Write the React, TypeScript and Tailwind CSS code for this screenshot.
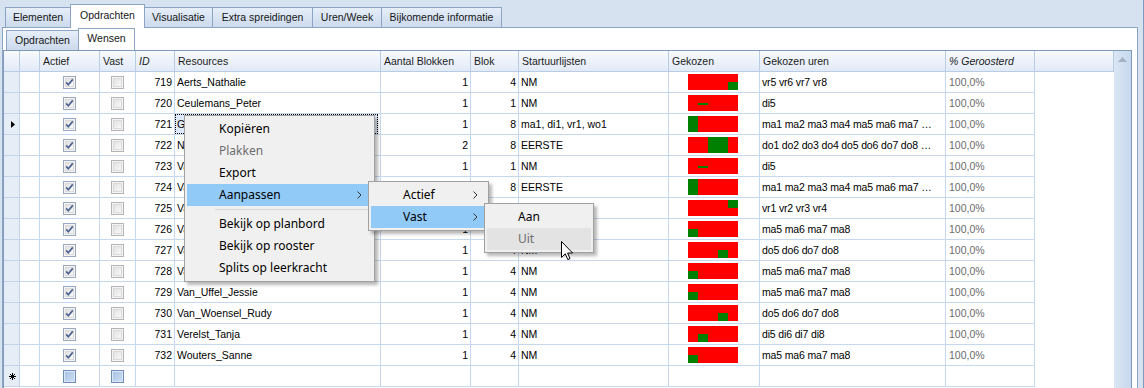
import React from 'react';

type Seg = [number, number, number];

interface Row {
  id: number;
  name: string;
  aantal: number;
  blok: number;
  start: string;
  uren: string;
  segs: Seg[];
}

const rows: Row[] = [
  { id: 719, name: 'Aerts_Nathalie', aantal: 1, blok: 4, start: 'NM', uren: 'vr5 vr6 vr7 vr8', segs: [[4, 5, 8]] },
  { id: 720, name: 'Ceulemans_Peter', aantal: 1, blok: 1, start: 'NM', uren: 'di5', segs: [[1, 5, 5]] },
  { id: 721, name: 'Goossens_Lies', aantal: 1, blok: 8, start: 'ma1, di1, vr1, wo1', uren: 'ma1 ma2 ma3 ma4 ma5 ma6 ma7 …', segs: [[0, 1, 8]] },
  { id: 722, name: 'Nijs_Karen', aantal: 2, blok: 8, start: 'EERSTE', uren: 'do1 do2 do3 do4 do5 do6 do7 do8 …', segs: [[2, 1, 8], [3, 1, 8]] },
  { id: 723, name: 'Van_Aelst_Jan', aantal: 1, blok: 1, start: 'NM', uren: 'di5', segs: [[1, 5, 5]] },
  { id: 724, name: 'Van_Dam_Els', aantal: 1, blok: 8, start: 'EERSTE', uren: 'ma1 ma2 ma3 ma4 ma5 ma6 ma7 …', segs: [[0, 1, 8]] },
  { id: 725, name: 'Van_Dyck_Tom', aantal: 1, blok: 4, start: 'NM', uren: 'vr1 vr2 vr3 vr4', segs: [[4, 1, 4]] },
  { id: 726, name: 'Van_Hove_Ann', aantal: 1, blok: 4, start: 'NM', uren: 'ma5 ma6 ma7 ma8', segs: [[0, 5, 8]] },
  { id: 727, name: 'Van_Looy_Bart', aantal: 1, blok: 4, start: 'NM', uren: 'do5 do6 do7 do8', segs: [[3, 5, 8]] },
  { id: 728, name: 'Van_Roey_Katrien', aantal: 1, blok: 4, start: 'NM', uren: 'ma5 ma6 ma7 ma8', segs: [[0, 5, 8]] },
  { id: 729, name: 'Van_Uffel_Jessie', aantal: 1, blok: 4, start: 'NM', uren: 'ma5 ma6 ma7 ma8', segs: [[0, 5, 8]] },
  { id: 730, name: 'Van_Woensel_Rudy', aantal: 1, blok: 4, start: 'NM', uren: 'do5 do6 do7 do8', segs: [[3, 5, 8]] },
  { id: 731, name: 'Verelst_Tanja', aantal: 1, blok: 4, start: 'NM', uren: 'di5 di6 di7 di8', segs: [[1, 5, 8]] },
  { id: 732, name: 'Wouters_Sanne', aantal: 1, blok: 4, start: 'NM', uren: 'ma5 ma6 ma7 ma8', segs: [[0, 5, 8]] },
];

const outerTabs = [
  { label: 'Elementen', w: 'w-[66px]' },
  { label: 'Opdrachten', w: 'w-[75px]', active: true },
  { label: 'Visualisatie', w: 'w-[69px]' },
  { label: 'Extra spreidingen', w: 'w-[101px]' },
  { label: 'Uren/Week', w: 'w-[70px]' },
  { label: 'Bijkomende informatie', w: 'w-[121px]' },
];

function Bar({ segs }: { segs: Seg[] }) {
  return (
    <svg width="50" height="16" className="block">
      <rect width="50" height="16" fill="#ff0000" />
      {segs.map(([d, a, b], i) => (
        <rect key={i} x={d * 10} y={(a - 1) * 2} width="10" height={(b - a + 1) * 2} fill="#008000" />
      ))}
    </svg>
  );
}

function Check({ checked, fresh }: { checked?: boolean; fresh?: boolean }) {
  if (fresh) {
    return (
      <span className="block w-[13px] h-[13px] border border-[#6f8cb6] p-px bg-[#dbe7f6]">
        <span className="block w-full h-full bg-linear-to-br from-[#a9c4e6] to-[#c9dbf1]" />
      </span>
    );
  }
  return (
    <span className={`relative block w-[13px] h-[13px] border ${checked ? 'border-[#9aa9be]' : 'border-[#b4b4b4]'} bg-[#f4f4f4] p-px`}>
      <span className="block w-full h-full border border-[#dadada] bg-linear-to-br from-[#e2e2e2] to-[#f8f8f8]" />
      {checked && (
        <svg width="13" height="13" viewBox="0 0 13 13" className="absolute -left-px -top-px">
          <path d="M3.2 6.4 L5.3 8.8 L9.8 3.4" fill="none" stroke="#4c6290" strokeWidth="1.7" />
        </svg>
      )}
    </span>
  );
}

function H({ w, italic, children }: { w: string; italic?: boolean; children?: React.ReactNode }) {
  return (
    <div
      className={`${w} shrink-0 h-full border-r border-b border-[#b9cce5] bg-linear-to-b from-[#f7fafe] to-[#e2eaf6] pl-[3px] leading-[20px] whitespace-nowrap overflow-hidden text-[#1b1b1b] ${italic ? 'italic' : ''}`}
    >
      {children}
    </div>
  );
}

function C({ w, cls = '', children }: { w: string; cls?: string; children?: React.ReactNode }) {
  return (
    <div className={`${w} shrink-0 h-full border-r border-b border-[#c6d8f0] leading-[20px] whitespace-nowrap overflow-hidden ${cls}`}>
      {children}
    </div>
  );
}

function Chevron() {
  return (
    <svg width="5" height="8" viewBox="0 0 5 8" className="absolute top-[7px]">
      <path d="M0.5 0.5 L4 4 L0.5 7.5" fill="none" stroke="#333" strokeWidth="1" />
    </svg>
  );
}

function DataRow({ r, focused }: { r: Row; focused?: boolean }) {
  return (
    <div className="flex h-[21px]">
      <div className="w-[16px] shrink-0 h-full border-r border-b border-[#c3d3e9] bg-[#e6edf7] flex items-center justify-center">
        {focused && (
          <svg width="4" height="7" viewBox="0 0 4 7" className="ml-[3px]">
            <path d="M0 0 L4 3.5 L0 7 Z" fill="#000" />
          </svg>
        )}
      </div>
      <C w="w-[20px]" />
      <C w="w-[60px]" cls="flex items-center justify-center">
        <Check checked />
      </C>
      <C w="w-[36px]" cls="flex items-center justify-center">
        <Check />
      </C>
      <C w="w-[39px]" cls="text-right pr-[2px]">{r.id}</C>
      <C w="w-[206px]" cls="pl-[2px] relative">
        {focused && (
          <div className="absolute inset-y-0 left-0 right-[2px] bg-[#dfe9f8] outline-1 outline-dotted outline-black -outline-offset-1" />
        )}
        <span className="relative">{r.name}</span>
      </C>
      <C w="w-[90px]" cls="text-right pr-[2px]">{r.aantal}</C>
      <C w="w-[48px]" cls="text-right pr-[2px]">{r.blok}</C>
      <C w="w-[150px]" cls="pl-[2px]">{r.start}</C>
      <C w="w-[91px]" cls="pl-[19px] pt-[2px]">
        <Bar segs={r.segs} />
      </C>
      <C w="w-[186px]" cls="pl-[2px] tracking-[-0.15px]">{r.uren}</C>
      <C w="w-[89px]" cls="pl-[3px] text-[#6b6b6b]">100,0%</C>
      <div className="flex-1" />
    </div>
  );
}

function NewRow() {
  return (
    <div className="flex h-[21px]">
      <div className="w-[16px] shrink-0 h-full border-r border-b border-[#c3d3e9] bg-[#e6edf7] flex items-center justify-center">
        <svg width="7" height="7" viewBox="0 0 7 7" className="ml-px">
          <path d="M3.5 0 V7 M0 3.5 H7 M1 1 L6 6 M6 1 L1 6" stroke="#000" strokeWidth="1" />
        </svg>
      </div>
      <C w="w-[20px]" />
      <C w="w-[60px]" cls="flex items-center justify-center">
        <Check fresh />
      </C>
      <C w="w-[36px]" cls="flex items-center justify-center">
        <Check fresh />
      </C>
      <C w="w-[39px]" />
      <C w="w-[206px]" />
      <C w="w-[90px]" />
      <C w="w-[48px]" />
      <C w="w-[150px]" />
      <C w="w-[91px]" />
      <C w="w-[186px]" />
      <C w="w-[89px]" />
      <div className="flex-1" />
    </div>
  );
}

function Item({
  label,
  pl,
  disabled,
  active,
  hover,
  arrow,
}: {
  label: string;
  pl: string;
  disabled?: boolean;
  active?: boolean;
  hover?: boolean;
  arrow?: string;
}) {
  const bg = active ? 'bg-[#91c9f7]' : hover ? 'bg-[#e3e3e3]' : '';
  return (
    <div className={`relative h-[22px] leading-[22px] ${pl} ${bg} ${disabled ? 'text-[#6d6d6d]' : 'text-black'}`}>
      {label}
      {arrow && (
        <span className={`absolute top-0 ${arrow}`}>
          <Chevron />
        </span>
      )}
    </div>
  );
}

export default function App() {
  return (
    <div className="relative w-[1144px] h-[388px] overflow-hidden bg-[#d6e2f0] border-r border-[#7f9bbd] flex flex-col font-['Liberation_Sans',Arial,sans-serif] text-[10.5px] text-black">
      {/* outer tabs */}
      <div className="h-[27px] shrink-0 flex items-end pl-[5px]">
        {outerTabs.map((t, i) => (
          <div
            key={t.label}
            className={`${t.w} ${i > 0 ? '-ml-px' : ''} shrink-0 flex items-center justify-center border-l border-t border-r border-[#8da5c5] text-[#161616] ${
              t.active
                ? 'relative z-10 h-[24px] -mb-px bg-white pb-[2px]'
                : 'h-[20px] bg-linear-to-b from-[#e6eef9] to-[#ccdaed]'
            }`}
          >
            {t.label}
          </div>
        ))}
      </div>

      {/* outer tab page */}
      <div className="ml-[2px] w-[1136px] flex-1 min-h-0 flex flex-col bg-white border-l border-t border-r border-[#8da5c5]">
        {/* inner tabs */}
        <div className="h-[22px] shrink-0 flex items-end pl-[3px]">
          <div className="w-[73px] h-[20px] shrink-0 flex items-center justify-center border-l border-t border-r border-[#8da5c5] bg-linear-to-b from-[#e6eef9] to-[#ccdaed] text-[#161616]">
            Opdrachten
          </div>
          <div className="w-[57px] -ml-px h-[22px] shrink-0 flex items-center justify-center border-l border-t border-r border-[#8da5c5] bg-white text-[#161616] pb-[1px]">
            Wensen
          </div>
        </div>

        {/* grid */}
        <div className="w-[1129px] flex-1 min-h-0 flex border-l border-t border-r border-[#7f9aba] bg-white">
          <div className="flex-1 flex flex-col">
            <div className="flex h-[21px] shrink-0">
              <H w="w-[16px]" />
              <H w="w-[20px]" />
              <H w="w-[60px]">Actief</H>
              <H w="w-[36px]">Vast</H>
              <H w="w-[39px]" italic>
                ID
              </H>
              <H w="w-[206px]">Resources</H>
              <H w="w-[90px]">Aantal Blokken</H>
              <H w="w-[48px]">Blok</H>
              <H w="w-[150px]">Startuurlijsten</H>
              <H w="w-[91px]">Gekozen</H>
              <H w="w-[186px]">Gekozen uren</H>
              <H w="w-[89px]" italic>
                % Geroosterd
              </H>
              <H w="flex-1" />
            </div>
            {rows.map((r) => (
              <DataRow key={r.id} r={r} focused={r.id === 721} />
            ))}
            <NewRow />
          </div>
          {/* vertical scrollbar */}
          <div className="w-[17px] shrink-0 bg-linear-to-r from-[#dae6f4] to-[#c7d8ed] flex justify-center">
            <svg width="9" height="5" viewBox="0 0 9 5" className="mt-[6px]">
              <path d="M0 5 L4.5 0 L9 5 Z" fill="#a3b1c3" />
            </svg>
          </div>
        </div>
      </div>

      {/* context menu */}
      <div className="absolute left-[184px] top-[115px] w-[191px] border border-[#a0a0a0] bg-[#f0f0f0] p-[2px] shadow-[3px_3px_3px_rgba(0,0,0,0.28)] font-['Noto_Sans',sans-serif] text-[12px]">
        <Item label="Kopiëren" pl="pl-[32px]" />
        <Item label="Plakken" pl="pl-[32px]" disabled />
        <Item label="Export" pl="pl-[32px]" />
        <Item label="Aanpassen" pl="pl-[32px]" active arrow="right-[15px]" />
        <div className="h-[7px] flex items-center">
          <div className="ml-[28px] h-px flex-1 bg-[#d7d7d7]" />
        </div>
        <Item label="Bekijk op planbord" pl="pl-[32px]" />
        <Item label="Bekijk op rooster" pl="pl-[32px]" />
        <Item label="Splits op leerkracht" pl="pl-[32px]" />
      </div>

      <div className="absolute left-[368px] top-[181px] w-[121px] border border-[#a0a0a0] bg-[#f0f0f0] p-[2px] shadow-[3px_3px_3px_rgba(0,0,0,0.28)] font-['Noto_Sans',sans-serif] text-[12px]">
        <Item label="Actief" pl="pl-[32px]" arrow="right-[13px]" />
        <Item label="Vast" pl="pl-[32px]" active arrow="right-[13px]" />
      </div>

      <div className="absolute left-[484px] top-[203px] w-[110px] border border-[#a0a0a0] bg-[#f0f0f0] p-[2px] shadow-[3px_3px_3px_rgba(0,0,0,0.28)] font-['Noto_Sans',sans-serif] text-[12px]">
        <Item label="Aan" pl="pl-[31px]" />
        <Item label="Uit" pl="pl-[31px]" disabled hover />
      </div>

      {/* mouse cursor */}
      <svg width="13" height="20" viewBox="0 0 13 20" className="absolute left-[561px] top-[241px]">
        <path d="M0.5 0.5 L0.5 16.5 L4.3 12.8 L6.8 18.6 L9 17.6 L6.6 12 L11.6 12 Z" fill="#fff" stroke="#000" strokeWidth="1" strokeLinejoin="round" />
      </svg>
    </div>
  );
}
